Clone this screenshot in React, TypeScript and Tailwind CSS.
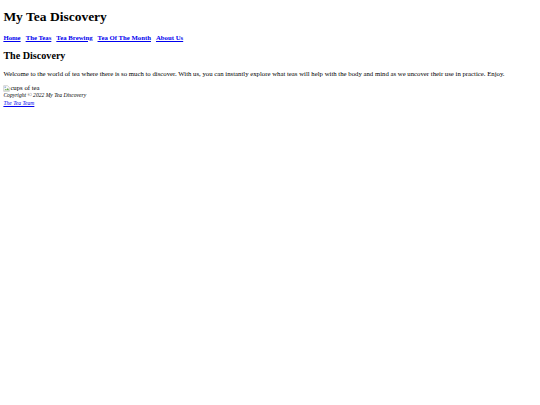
export default function App() {
  const links = ["Home", "The Teas", "Tea Brewing", "Tea Of The Month", "About Us"];
  return (
    <div className="min-h-[405px] bg-white px-[3.375px] pb-[3.375px] text-black" style={{ fontFamily: '"Liberation Serif", "Times New Roman", serif' }}>
      <header>
        <h1 className="mt-[9.05px] mb-[9.05px] text-[13.5px] font-bold leading-[1.15]">My Tea Discovery</h1>
        <nav className="text-[6.75px] font-bold leading-[1.15]">
          <ul className="flex gap-[5px]">
            {links.map((l) => (
              <li key={l}>
                <a href="#" className="text-[#0000EE] underline">{l}</a>
              </li>
            ))}
          </ul>
        </nav>
      </header>
      <main>
        <h2 className="my-[8.4px] text-[10.125px] font-bold leading-[1.15]">The Discovery</h2>
        <p className="my-[6.75px] text-[6.75px] leading-[1.15]">
          Welcome to the world of tea where there is so much to discover. With us, you can instantly explore what teas will help with the body and mind as we uncover their use in practice. Enjoy.
        </p>
        <div className="flex items-end text-[6.75px] leading-[1.15]">
          <svg width="7" height="7" viewBox="0 0 16 16" className="mb-[0.5px]">
            <path d="M1.5 1.5h9l4 4v9h-13z" fill="#f7f7f7" stroke="#a0a0a0" strokeWidth="1" />
            <path d="M3 12l3-3 2 2 3-4 3 5z" fill="#6aa84f" />
            <circle cx="5" cy="5" r="1.5" fill="#5b8fd6" />
          </svg>
          <span>cups of tea</span>
        </div>
      </main>
      <footer className="text-[6.75px] leading-[1.15]">
        <p className="text-[5.6px] italic leading-[7.8px]">Copyright © 2022 My Tea Discovery</p>
        <p className="text-[5.6px] italic leading-[7.8px]">
          <a href="#" className="text-[#0000EE] underline">The Tea Team</a>
        </p>
      </footer>
    </div>
  );
}
